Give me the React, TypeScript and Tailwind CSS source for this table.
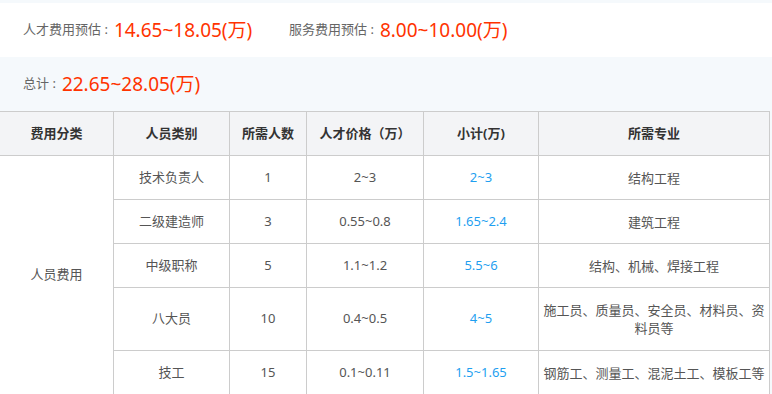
import React from "react";

const font = { fontFamily: '"Noto Sans", "Noto Sans CJK SC", sans-serif' };

const rows = [
  { type: "技术负责人", n: "1", price: "2~3", sub: "2~3", major: "结构工程", h: "h-[44px]" },
  { type: "二级建造师", n: "3", price: "0.55~0.8", sub: "1.65~2.4", major: "建筑工程", h: "h-[44px]" },
  { type: "中级职称", n: "5", price: "1.1~1.2", sub: "5.5~6", major: "结构、机械、焊接工程", h: "h-[44px]" },
  { type: "八大员", n: "10", price: "0.4~0.5", sub: "4~5", major: "施工员、质量员、安全员、材料员、资料员等", h: "h-[63px]" },
  { type: "技工", n: "15", price: "0.1~0.11", sub: "1.5~1.65", major: "钢筋工、测量工、混泥土工、模板工等", h: "h-[44px]" },
];

export default function App() {
  const cell = "border-r border-b border-[#cccccc] text-center align-middle p-0";
  return (
    <div className="w-[772px] h-[394px] overflow-hidden bg-[#f5f9fc] pt-[3px]" style={font}>
      <div className="h-[54px] bg-white flex items-center pl-[23px]">
        <div className="w-[266px] flex items-center">
          <span className="text-[13px] text-[#666666]">人才费用预估 :</span>
          <span className="text-[19px] text-[#ff3300] ml-[6px]">14.65~18.05(万)</span>
        </div>
        <div className="flex items-center">
          <span className="text-[13px] text-[#666666]">服务费用预估 :</span>
          <span className="text-[19px] text-[#ff3300] ml-[6px]">8.00~10.00(万)</span>
        </div>
      </div>
      <div className="h-[54px] flex items-center pl-[23px]">
        <span className="text-[13px] text-[#666666]">总计 :</span>
        <span className="text-[19px] text-[#ff3300] ml-[6px]">22.65~28.05(万)</span>
      </div>
      <table className="w-[770px] table-fixed border-separate border-spacing-0 bg-white border-t border-[#cccccc] text-[13px] text-[#555555]">
        <colgroup>
          <col className="w-[114px]" />
          <col className="w-[116px]" />
          <col className="w-[77px]" />
          <col className="w-[117px]" />
          <col className="w-[115px]" />
          <col className="w-[231px]" />
        </colgroup>
        <thead>
          <tr className="h-[44px] bg-[#f3f4f6]">
            {["费用分类", "人员类别", "所需人数", "人才价格（万）", "小计(万)", "所需专业"].map((t) => (
              <th key={t} className={`${cell} font-bold text-[#333333]`}>{t}</th>
            ))}
          </tr>
        </thead>
        <tbody>
          {rows.map((r, i) => (
            <tr key={r.type} className={r.h}>
              {i === 0 && (
                <td rowSpan={5} className={`${cell}`}>
                  人员费用
                </td>
              )}
              <td className={cell}>{r.type}</td>
              <td className={cell}>{r.n}</td>
              <td className={cell}>{r.price}</td>
              <td className={`${cell} text-[#1f9ff0]`}>{r.sub}</td>
              <td className={`${cell} px-[4px] leading-[18px]`}>{r.major}</td>
            </tr>
          ))}
        </tbody>
      </table>
    </div>
  );
}
